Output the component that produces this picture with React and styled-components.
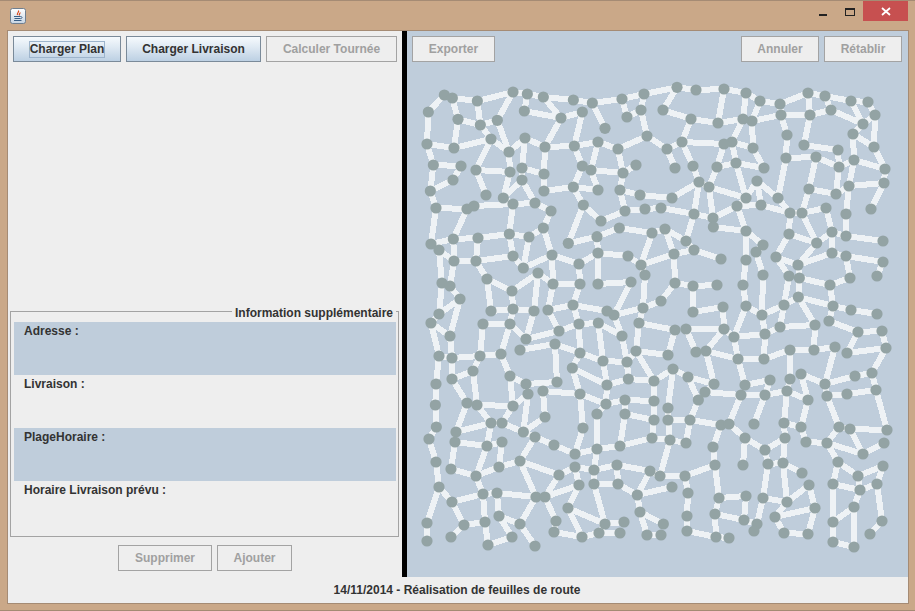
import React from "react";
import styled, { createGlobalStyle } from "styled-components";

const Global = createGlobalStyle`
  html, body { margin: 0; padding: 0; width: 915px; height: 611px; overflow: hidden; background: #caa888; }
  #root { width: 915px; height: 611px; }
`;

const Frame = styled.div`
  box-sizing: border-box; width: 915px; height: 611px; padding: 0 7px 7px 8px;
  background: #caa888; border: 1px solid #a58b74; border-width: 1px 0 1px 0;
  display: flex; flex-direction: column;
  font: bold 12px "Liberation Sans", Arial, sans-serif; color: #333333;
`;
const TitleBar = styled.div`
  height: 30px; flex: none; display: flex; align-items: flex-start; justify-content: space-between;
`;
const AppIcon = styled.svg` width: 16px; height: 16px; margin: 7px 0 0 2px; `;
const WinControls = styled.div` display: flex; align-items: flex-start; `;
const MinBtn = styled.div`
  width: 8px; height: 2px; margin: 13px 18px 0 0; background: #222;
`;
const MaxBtn = styled.div`
  box-sizing: border-box; width: 10px; height: 8px; margin: 7px 8px 0 0;
  border: 1px solid #222; border-top-width: 2px;
`;
const CloseBtn = styled.div`
  width: 45px; height: 20px; background: #c75050; display: flex; align-items: center; justify-content: center;
`;
const Client = styled.div`
  flex: 1; min-height: 0; display: flex; flex-direction: column; background: #eeeeee;
  outline: 1px solid #a58b74;
`;
const Split = styled.div` flex: 1; min-height: 0; display: flex; `;
const LeftPane = styled.div`
  box-sizing: border-box; width: 394px; flex: none; display: flex; flex-direction: column; padding: 5px 0 0 0;
`;
const Divider = styled.div` width: 5px; flex: none; background: #000; `;
const RightPane = styled.div`
  flex: 1; min-width: 0; background: #bfcddb; display: flex; flex-direction: column;
`;
const ToolRow = styled.div` display: flex; gap: 5px; padding: 0 0 0 5px; `;
const RightTools = styled.div`
  display: flex; justify-content: space-between; padding: 5px 6px 0 5px; flex: none;
`;
const Group = styled.div` display: flex; gap: 5px; `;
const Btn = styled.button`
  box-sizing: border-box; width: ${(p) => p.$w}px; height: 26px; padding: 0; flex: none; position: relative;
  font: bold 12px "Liberation Sans", Arial, sans-serif; white-space: nowrap;
  display: flex; align-items: center; justify-content: center;
  color: #333333; border: 1px solid #7a8a99;
  background: linear-gradient(#f6fafd 0%, #dde8f2 45%, #bcd0e3 100%);
  &:disabled { color: #a0a0a0; border-color: #a3a3a3; background: #eeeeee; }
`;
const Focus = styled.span`
  border: 1px solid #9db4cc; width: 76px; height: 17px; box-sizing: border-box;
  display: flex; align-items: center; justify-content: center; white-space: nowrap;
`;
const Spacer = styled.div` flex: 1; `;
const Fieldset = styled.div`
  box-sizing: border-box; position: relative; width: 389px; height: 226px; margin: 0 0 0 2px;
  border: 1px solid #a3a3a3; padding: 10px 2px 0 3px;
`;
const Legend = styled.div`
  position: absolute; top: -6px; right: 2px; background: #eeeeee; padding: 0 3px; line-height: 14px;
`;
const InfoRow = styled.div`
  height: 53px; box-sizing: border-box; padding: 2px 0 0 10px; line-height: 14px;
  background: ${(p) => (p.$shaded ? "#bfcddb" : "transparent")};
`;
const BottomBtns = styled.div`
  display: flex; justify-content: center; gap: 5px; padding: 8px 0 0 0; height: 34px;
  box-sizing: border-box; margin-bottom: 6px;
`;
const Status = styled.div`
  height: 26px; flex: none; display: flex; justify-content: center; align-items: center; padding-right: 2px;
  box-sizing: border-box;
`;
const Graph = styled.svg` display: block; flex: 1; width: 501px; min-height: 0; `;

const crops = [
  [405, 70, [
    [70,126,118,75,142,84,217,93,324,66,367,72,415,81,505,90,562,99,651,87,717,72,816,52],
    [70,126,66,222,147,234,258,207,312,246,360,204,420,231,508,228,579,216,639,237,726,198,708,120,717,72],
    [142,84,159,148,226,165,277,151,324,66],[217,93,226,165,258,207],[159,148,147,234],[277,151,312,246],
    [367,72,358,123,468,144,532,126,508,228],[415,81,468,144,420,231],[562,99,600,175],[651,87,666,141,708,120],
    [258,207,213,300,315,306,295,384,324,402,390,399,438,423,415,474],[213,300,243,375],
    [360,204,351,294,417,312],[312,246,315,306],[351,294,351,330,390,399],[351,330,295,384],
    [420,231,417,312,417,363,505,351,579,360,558,300,579,216],
    [508,228,532,288,505,351,535,405,588,453,660,423,645,360,654,309,639,237],
    [532,288,558,300,654,309,693,285],[645,360,705,375,801,384],[660,423,720,417,768,414],[535,405,490,520],
    [741,489,643,474,576,500,490,520],[85,285,168,288,144,330,76,363,85,285,66,222],[76,363,93,414,186,417],
    [207,408,324,402,313,492],[93,414,78,522],[186,417,145,507],[78,522,145,507,219,504,313,492,372,501,415,474],
    [415,474,441,555],[186,417,207,408],
  ]],
  [650, 70, [
    [39,120,81,52,138,60,222,57,288,69,330,93,390,102,474,69,525,78,603,93,654,96,675,135,639,162,543,120,480,135,393,135,306,153,279,147,204,159,123,147,39,120],
    [222,57,204,159],[288,69,279,147,246,216,258,279,288,384,321,333,333,405,261,408,288,384],
    [330,93,306,153,309,234,342,294,258,279,201,291,222,222,246,216,309,234],[222,222,96,216,123,147],
    [96,216,51,237,75,294],[-9,198,51,237],[96,216,129,288,147,336,66,384],[147,336,177,351,201,291],
    [147,336,132,432,33,414],[132,432,189,444,177,351,288,384],[189,444,261,408],[261,408,288,483,190,471],
    [333,405,420,429,456,429,528,414,546,486,588,498,699,513],[321,333,384,384,420,429,417,492,500,519],
    [390,102,393,135,411,195,408,264,384,384],[474,69,480,135,462,225,564,240,567,291,498,261,408,264],[525,78,543,120],
    [498,261,477,357,558,372,567,291,612,270,705,297,702,339,663,417],[477,357,456,429,501,519],[612,270,597,348,558,372],
    [597,348,702,339],[597,348,588,432,588,498],[609,192,612,270],[609,192,672,231,705,297],[675,135,672,231],
    [603,93,639,162,609,192],[132,432,108,513],[6,489,45,477],
  ]],
  [405, 230, [
    [102,60,147,93,213,93,324,78,355,114,441,75,522,102,579,69,669,78,708,105,741,10],
    [145,27,147,93],[219,24,213,93],[313,12,324,78],[372,21,355,114],[576,20,579,69],
    [579,69,579,162,678,156,627,255,606,243,504,225,429,240,462,303,522,282,504,225],
    [522,102,525,162,444,162,441,75],[525,162,504,225],[444,162,429,240],[444,162,399,129,321,183,246,147,213,93],
    [246,147,258,243,324,237,387,243,399,129],[321,183,324,237,315,282,234,282,225,378],[387,243,363,327,462,303],
    [363,327,315,282,288,372,225,378,141,384,102,378,78,279,102,252,111,159,102,60],[111,159,135,168,165,207,102,252],
    [147,93,135,168],[165,207,135,318,141,384],[78,279,135,318],[102,378,93,462,91,525],
    [141,384,141,447,204,423,225,378],[204,423,216,525],[141,447,186,519],
    [288,372,315,438,363,462,456,456,450,342,345,360],
    [450,342,525,369,594,393,666,396,693,363,702,279,714,234,627,255,651,318,666,396],
    [522,282,525,369,502,414,525,492,414,483,420,561],[522,282,580,279,651,318],[580,279,594,393,606,465,603,522],
    [502,414,606,465,670,447,747,453],[666,396,670,447],[708,105,720,135,714,234],[693,363,747,453],[315,438,324,528],
    [363,462,369,492,324,528],[369,492,355,606],
  ]],
  [650, 230, [
    [-27,105,72,72,132,60,213,87],[72,72,75,159,129,168,201,165],[75,159,33,213,-21,234],
    [129,168,129,246,219,231,222,297,108,297,138,366,168,363,222,297,252,321,288,228,279,165,288,90,288,9,339,45,318,66],
    [318,66,339,135,336,255,288,228],[252,321,264,387,168,363,192,462,165,486,273,495,345,495,411,483,420,447,420,360],
    [252,321,345,312,336,255,402,225,390,291,345,312],
    [390,291,495,285,492,360,420,360,342,387,264,387,285,465,360,450,345,495],[345,312,342,387],
    [492,360,555,351,525,462,531,498,591,492,678,480,666,429,708,354,696,303,624,306,537,273,549,228,540,165,448,144,445,201,402,225,417,138,378,81,417,12,501,39,444,105,378,81],
    [445,201,495,285],[445,201,549,228,603,240,681,252],[448,144,444,105,546,69,588,78,699,96,681,138],
    [588,78,600,144,540,165],[501,39,546,9,546,69],[546,9,588,18,699,36],[624,306,591,369,708,354],
    [666,429,615,438,525,462,453,432,474,510],[411,483,474,510],
    [-42,363,54,375,75,300,-33,279],[12,453,69,417,114,441,192,462],[69,417,54,534],[114,441,145,510],[12,453,12,513],
    [45,-3,72,72],[45,-3,6,10,-27,105],[108,33,132,60],[132,-48,108,33],[45,-3,108,33],
  ]],
  [405, 390, [
    [91,45,94,111,72,147,93,216,102,291,66,399,66,453],
    [186,39,153,126,258,99,291,99,355,126,390,141,447,165,510,192,576,177,645,168,741,144],
    [216,45,324,48,291,99],[216,45,258,99,246,168,150,156,153,126],[246,168,291,156,282,231,213,258,246,168],
    [213,258,138,237,150,156],[213,258,234,312,141,336,102,291],
    [141,336,177,405,240,396,234,312,276,309,393,321,345,213,282,231],[345,213,390,141],
    [345,213,462,255,510,231,522,285,420,321,462,255],
    [510,231,567,240,636,225,735,243,697,315,705,366,726,435,768,435],[705,366,775,402],[697,315,801,291],[639,282,697,315],
    [636,225,639,282,567,282,567,240],[567,282,600,402,657,396],[600,402,582,429,645,429],[582,429,531,441,447,426],
    [489,354,531,441],[489,354,600,402],[522,285,489,354],[420,321,393,321,345,402,390,468],[420,321,453,393,447,426],
    [177,405,138,441],[240,396,249,465,321,441,282,378,276,309],[282,378,345,402],[420,81,355,126],
    [525,12,534,114,510,192],[525,12,603,42,660,30,747,33],[603,42,576,72,576,177,567,240],[660,30,660,72,645,168],[660,72,747,90],
  ]],
  [650, 390, [
    [12,33,12,90,6,144,60,150,108,159,120,90,54,90,60,150,30,258,0,243],[54,54,54,90],
    [30,258,105,258,195,225,189,171,213,105,120,90],[120,90,145,30],
    [105,258,114,309,111,378,111,423,198,441,195,372,207,324,195,225],[207,324,288,318,282,390,195,372],[198,441,237,444],
    [282,390,321,402,312,423],[321,402,339,324,411,336,399,219,354,222,339,324],[354,222,345,180,405,144,399,219,456,249],
    [345,180,285,144,237,102,273,15],[213,105,237,102],[285,144,279,225],[405,144,402,99,411,3,474,30,453,111,402,99],
    [453,111,468,156,531,159,567,111,600,117,711,120,678,0],[600,117,639,192,702,159],[531,159,639,192],
    [531,159,564,216,624,258,699,228,681,282,696,393,660,432],[624,258,630,300,681,282],
    [564,216,549,282,630,300,612,351,612,471,549,456,549,396,549,282],[549,396,612,351],[567,111,531,18],
    [411,336,477,285,495,354,474,432,402,429,375,381,411,336],[375,381,495,354],[345,15,312,102],
  ]],
];

const nodes = [];
const canon = (x, y) => {
  const hit = nodes.find((n) => Math.abs(n[0] - x) < 2.6 && Math.abs(n[1] - y) < 2.6);
  if (hit) return hit;
  const n = [x, y];
  nodes.push(n);
  return n;
};
const edges = [];
crops.forEach(([ox, oy, lines]) => {
  lines.forEach((l) => {
    let prev = null;
    for (let i = 0; i < l.length; i += 2) {
      const cur = canon(ox + l[i] / 3, oy + l[i + 1] / 3);
      if (prev) edges.push([prev[0], prev[1], cur[0], cur[1]]);
      prev = cur;
    }
  });
});

const RoadMap = () => (
  <Graph viewBox="407 62 501 515" preserveAspectRatio="xMinYMin meet">
    <g stroke="#eef2f5" strokeWidth="6" shapeRendering="crispEdges">
      {edges.map((e, i) => <line key={i} x1={e[0]} y1={e[1]} x2={e[2]} y2={e[3]} />)}
    </g>
    <g fill="#93a3a4">
      {nodes.map((n, i) => <circle key={i} cx={n[0]} cy={n[1]} r="5.6" />)}
    </g>
  </Graph>
);

export default function App() {
  return (
    <>
      <Global />
      <Frame>
        <TitleBar>
          <AppIcon viewBox="0 0 16 16">
            <defs>
              <linearGradient id="ic" x1="0" y1="0" x2="0" y2="1">
                <stop offset="0" stopColor="#ffffff" />
                <stop offset="1" stopColor="#c6d4e2" />
              </linearGradient>
            </defs>
            <rect x="0.5" y="0.5" width="15" height="15" rx="2" fill="url(#ic)" stroke="#6f7f8f" />
            <path d="M8.5 2.5c1 1.5-2 2.5-1 4.5M10 4.5c.5 1-1.5 1.5-.5 3" stroke="#d8481c" strokeWidth="1.2" fill="none" />
            <path d="M4 8.5h6.5M4.5 10.5h6M4 12.5h7.5M10.5 8.5c2 0 2 2 0 2.2" stroke="#3a5f86" strokeWidth="1" fill="none" />
          </AppIcon>
          <WinControls>
            <MinBtn />
            <MaxBtn />
            <CloseBtn>
              <svg width="10" height="9" viewBox="0 0 10 9">
                <path d="M1 1l8 7M9 1L1 8" stroke="#fff" strokeWidth="1.8" />
              </svg>
            </CloseBtn>
          </WinControls>
        </TitleBar>
        <Client>
          <Split>
            <LeftPane>
              <ToolRow>
                <Btn $w={108}><Focus>Charger Plan</Focus></Btn>
                <Btn $w={135}>Charger Livraison</Btn>
                <Btn $w={131} disabled>Calculer Tournée</Btn>
              </ToolRow>
              <Spacer />
              <Fieldset>
                <Legend>Information supplémentaire</Legend>
                <InfoRow $shaded>Adresse :</InfoRow>
                <InfoRow>Livraison :</InfoRow>
                <InfoRow $shaded>PlageHoraire :</InfoRow>
                <InfoRow>Horaire Livraison prévu :</InfoRow>
              </Fieldset>
              <BottomBtns>
                <Btn $w={94} disabled>Supprimer</Btn>
                <Btn $w={75} disabled>Ajouter</Btn>
              </BottomBtns>
            </LeftPane>
            <Divider />
            <RightPane>
              <RightTools>
                <Btn $w={83} disabled>Exporter</Btn>
                <Group>
                  <Btn $w={78} disabled>Annuler</Btn>
                  <Btn $w={78} disabled>Rétablir</Btn>
                </Group>
              </RightTools>
              <RoadMap />
            </RightPane>
          </Split>
          <Status>14/11/2014 - Réalisation de feuilles de route</Status>
        </Client>
      </Frame>
    </>
  );
}
